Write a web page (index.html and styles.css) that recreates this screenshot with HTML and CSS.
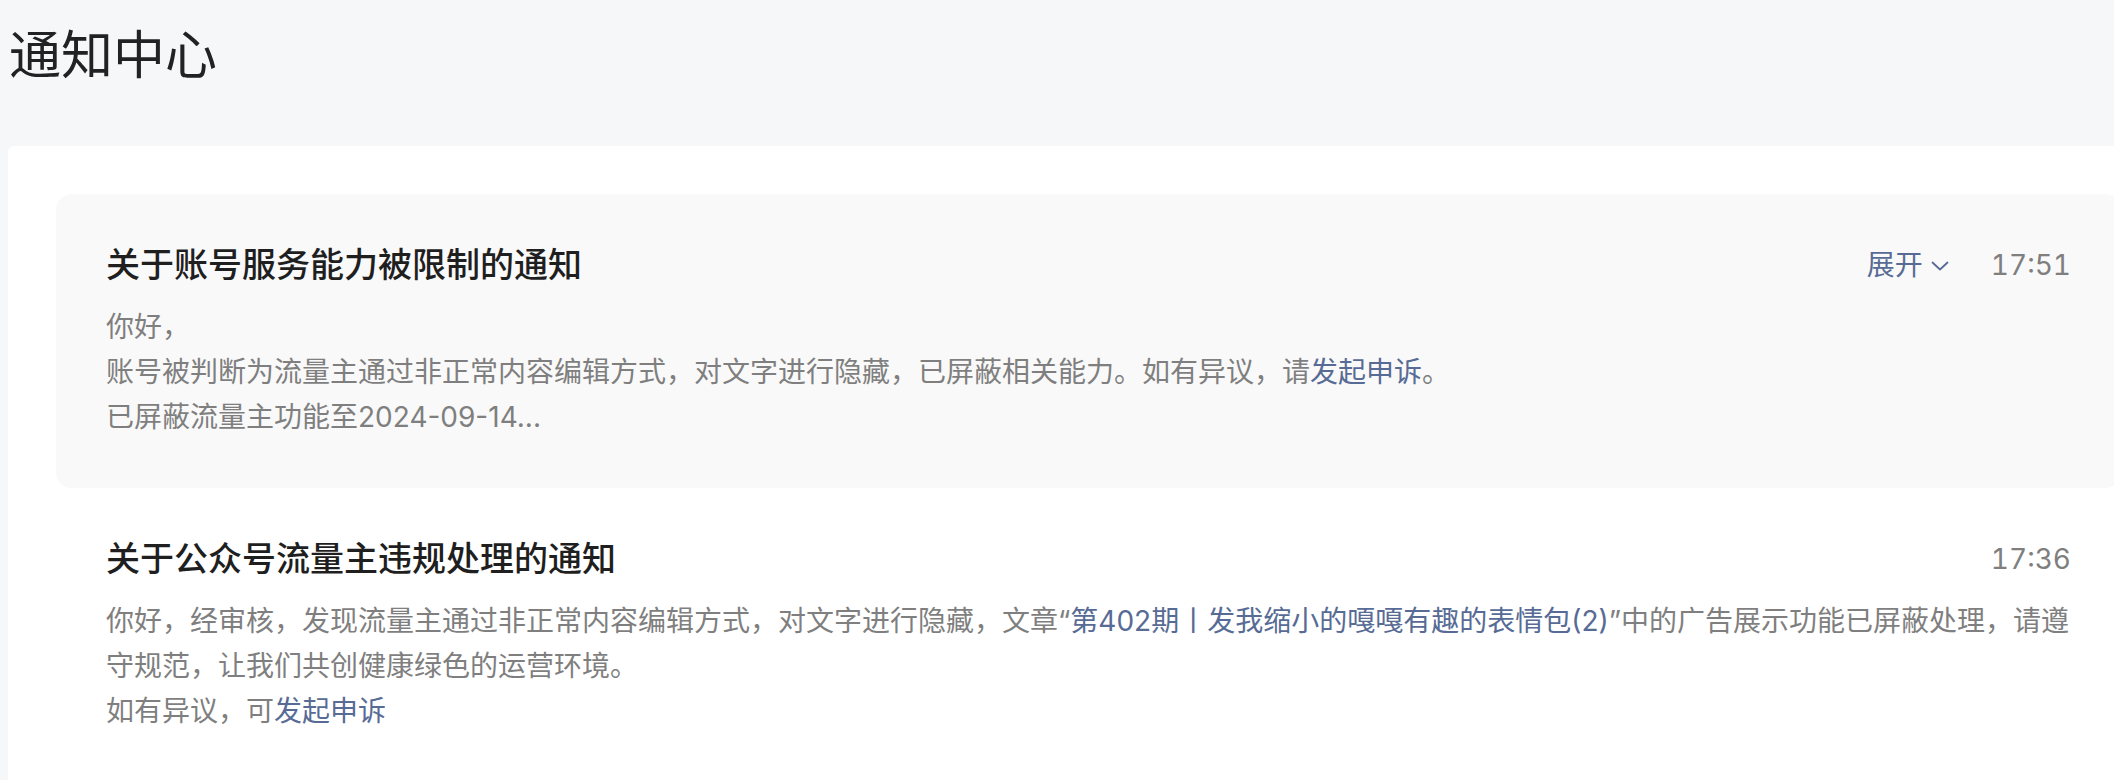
FILE: index.html
```html
<!DOCTYPE html>
<html lang="zh-CN">
<head>
  <meta charset="UTF-8" />
  <meta name="viewport" content="width=device-width, initial-scale=1.0"/>
  <title>通知中心</title>
  <link rel="stylesheet" href="styles.css">
</head>
<body>
  <div class="page">
    <header>
      <h1>通知中心</h1>
    </header>

    <!-- 通知列表 -->
    <div class="notice-card">
      <div class="notice notice-active">
        <div class="notice-head">
          <h2 class="notice-title">关于账号服务能力被限制的通知</h2>
          <a class="notice-toggle" href="#">展开<svg class="chevron" width="18" height="10" viewBox="0 0 18 10"><path d="M1.5 1.5 L9 8.5 L16.5 1.5" fill="none" stroke="currentColor" stroke-width="1.8" stroke-linecap="round" stroke-linejoin="round"/></svg></a>
          <span class="notice-time">17:51</span>
        </div>
        <div class="notice-body">
          <p>你好，</p>
          <p>账号被判断为流量主通过非正常内容编辑方式，对文字进行隐藏，已屏蔽相关能力。如有异议，请<a href="#">发起申诉</a>。</p>
          <p>已屏蔽流量主功能至2024-09-14...</p>
        </div>
      </div>

      <div class="notice">
        <div class="notice-head">
          <h2 class="notice-title">关于公众号流量主违规处理的通知</h2>
          <span class="notice-time">17:36</span>
        </div>
        <div class="notice-body">
          <p>你好，经审核，发现流量主通过非正常内容编辑方式，对文字进行隐藏，文章“<a href="#">第402期丨发我缩小的嘎嘎有趣的表情包(2)</a>”中的广告展示功能已屏蔽处理，请遵守规范，让我们共创健康绿色的运营环境。</p>
          <p>如有异议，可<a href="#">发起申诉</a></p>
        </div>
      </div>
    </div>
  </div>
</body>
</html>
```

FILE: styles.css
```css
/* Colores */
:root {
  --bg-page: #f6f7f9;
  --bg-card: #ffffff;
  --bg-active: #f9f9f9;
  --text-dark: #1f1f1f;
  --text-gray: #7f7f7f;
  --link: #576b95;
}
* { box-sizing: border-box; margin: 0; padding: 0; }
html, body {
  overflow: hidden;
}
body {
  background: var(--bg-page);
  color: var(--text-dark);
  font-family: Inter, "Noto Sans CJK SC", sans-serif;
}
.page {
  width: 2177px;
  padding: 0 8px;
}

/* CABECERA */
header {
  padding: 26px 0 0 1px;
  height: 146px;
}
header h1 {
  font-size: 52px;
  font-weight: normal;
  line-height: 60px;
  color: #222222;
}

/* TARJETA */
.notice-card {
  background: var(--bg-card);
  border-radius: 6px;
  padding: 48px 48px;
  min-height: 700px;
}
.notice {
  padding: 49px 50px 48px;
  border-radius: 16px;
}
.notice-active {
  background: var(--bg-active);
}
.notice-head {
  display: flex;
  align-items: center;
  height: 44px;
}
.notice-title {
  flex: 1;
  font-size: 34px;
  font-weight: 500;
  line-height: 44px;
  color: var(--text-dark);
}
.notice-toggle {
  display: flex;
  align-items: center;
  font-size: 28px;
  line-height: 44px;
  color: var(--link);
  text-decoration: none;
}
.chevron {
  margin-left: 8px;
  margin-top: 2px;
}
.notice-time {
  margin-left: 42px;
  font-size: 28px;
  font-variant-numeric: tabular-nums;
  line-height: 44px;
  color: var(--text-gray);
}
.notice-body {
  margin-top: 18px;
  font-size: 28px;
  line-height: 45px;
  color: var(--text-gray);
}
.notice-body a {
  color: var(--link);
  text-decoration: none;
}
```
